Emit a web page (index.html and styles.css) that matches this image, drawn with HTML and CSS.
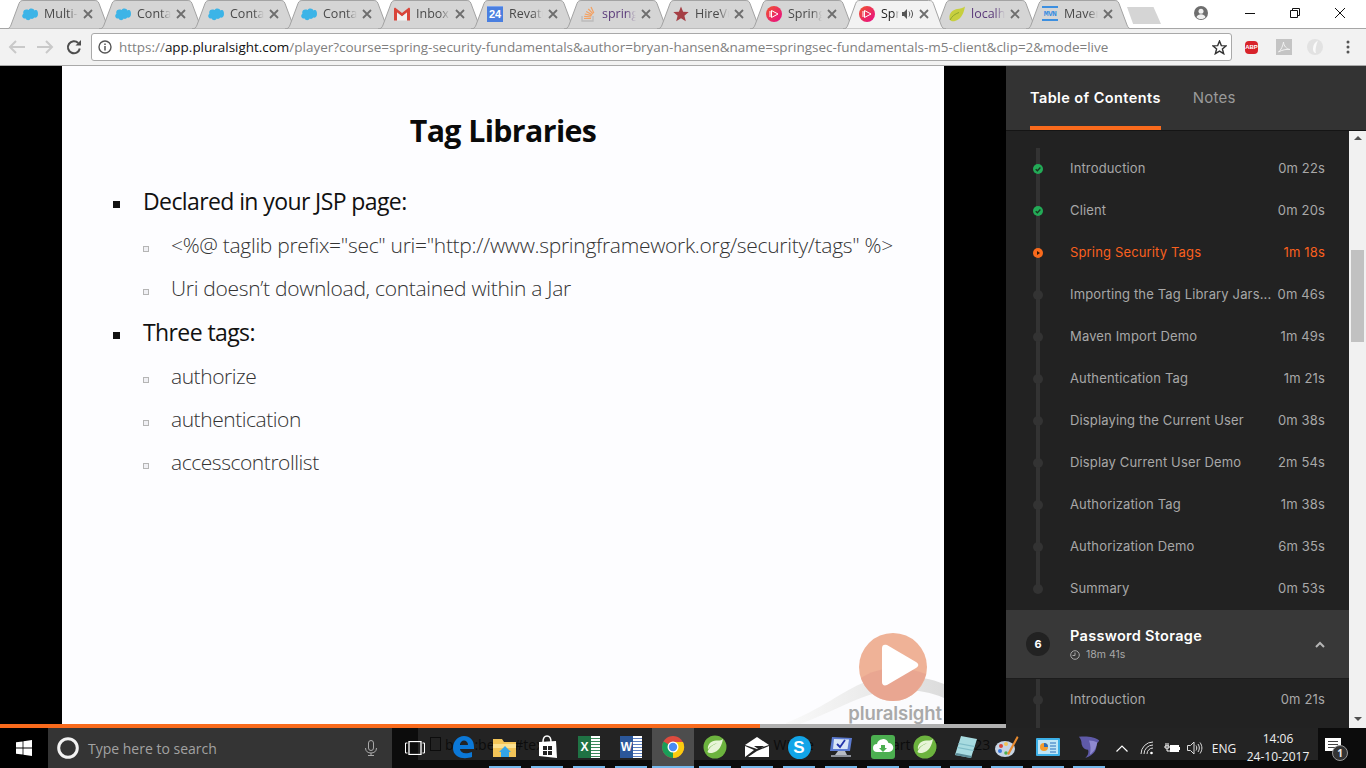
FILE: index.html
```html
<!DOCTYPE html>
<html lang="en">
<head>
<meta charset="utf-8">
<title>Spring Security Fundamentals</title>
<link rel="stylesheet" href="styles.css">
</head>
<body>
<svg class="sprite" aria-hidden="true">
  <defs><linearGradient id="psg" x1="0" y1="0" x2="1" y2="1"><stop offset="0" stop-color="#f0562c"/><stop offset="1" stop-color="#e80a89"/></linearGradient></defs>
  <symbol id="tabshape" viewBox="0 0 106 29" preserveAspectRatio="none"><path d="M0 29C3 29 4 27.5 5 25L13 3.500C14 1 15 .5 18 .5L88 .5C91 .5 92 1 93 3.500L101 25C102 27.500 103 29 106 29Z"/></symbol>
  <symbol id="x" viewBox="0 0 10 10"><path d="M1 1L9 9M9 1L1 9" fill="none" stroke="#6e6e6e" stroke-width="1.800"/></symbol>
  <symbol id="cloud" viewBox="0 0 16 12"><path fill="#3cb4e7" d="M6.600 1.900C7.300 1 8.300.5 9.400.5c1.400 0 2.600.8 3.200 1.900.5-.2 1-.3 1.500-.3 1 0 1.900 1.700 1.900 3.800 0 2.200-1.300 3.800-3 3.800-.3 0-.6 0-.8-.1-.5.8-1.300 1.300-2.300 1.300-.4 0-.8-.1-1.200-.3-.5 1-1.400 1.600-2.500 1.600s-2.100-.7-2.500-1.700c-.2 0-.4.1-.6.100C1.300 10.600.2 9.400.2 8c0-.9.500-1.800 1.200-2.300-.2-.4-.2-.8-.2-1.200C1.200 2.900 2.600 1.600 4.200 1.600c.9 0 1.800.1 2.400.3z"/></symbol>
  <symbol id="psicon" viewBox="0 0 16 16"><circle cx="8" cy="8" r="8" fill="url(#psg)"/><path d="M4 5v6M5.500 4.500v7L12 8z" fill="none" stroke="#fff" stroke-width="1"/></symbol>
  <symbol id="leaf" viewBox="0 0 24 24"><circle cx="12" cy="12" r="11.500" fill="#6cb33e"/><path d="M20 4C19 10 16 17 9 18c-2 .3-3.500-.2-4.500-1C6 12 11 9 15 8 11 8.500 7 11 5 14.500 4 9 9 5 14 5.500c2.500.2 4.500-.2 6-1.500z" fill="#e8f4d8"/></symbol>
  <symbol id="done" viewBox="0 0 10 10"><circle cx="5" cy="5" r="5" fill="#23ab57"/><path d="M2.700 5.200L4.400 6.800 7.400 3.500" fill="none" stroke="#17351f" stroke-width="1.300"/></symbol>
  <symbol id="current" viewBox="0 0 10 10"><circle cx="5" cy="5" r="5" fill="#f96a1c"/><path d="M4 3l3 2-3 2z" fill="#2a1608"/></symbol>
  <symbol id="arrow" viewBox="0 0 18 14"><path d="M17 7H2M8 1L2 7l6 6" fill="none" stroke-width="2"/></symbol>
</svg>

<header class="tabstrip">
  <div class="tab"><svg class="tabbg"><use href="#tabshape"/></svg><svg class="fav"><use href="#cloud"/></svg><span class="ttl">Multi-Org</span><svg class="close"><use href="#x"/></svg></div>
  <div class="tab"><svg class="tabbg"><use href="#tabshape"/></svg><svg class="fav"><use href="#cloud"/></svg><span class="ttl">Contacts</span><svg class="close"><use href="#x"/></svg></div>
  <div class="tab"><svg class="tabbg"><use href="#tabshape"/></svg><svg class="fav"><use href="#cloud"/></svg><span class="ttl">Contacts</span><svg class="close"><use href="#x"/></svg></div>
  <div class="tab"><svg class="tabbg"><use href="#tabshape"/></svg><svg class="fav"><use href="#cloud"/></svg><span class="ttl">Contacts</span><svg class="close"><use href="#x"/></svg></div>
  <div class="tab"><svg class="tabbg"><use href="#tabshape"/></svg>
    <svg class="fav" viewBox="0 0 16 13"><path d="M0 1v12h3V5l5 4 5-4v8h3V1l-1-1-7 5.500L1 0z" fill="#d9453a"/><path d="M3 5v8h10V5L8 9z" fill="#f1f1f1"/></svg>
    <span class="ttl">Inbox (12)</span><svg class="close"><use href="#x"/></svg></div>
  <div class="tab"><svg class="tabbg"><use href="#tabshape"/></svg><span class="cal">24</span><span class="ttl">Revature</span><svg class="close"><use href="#x"/></svg></div>
  <div class="tab"><svg class="tabbg"><use href="#tabshape"/></svg>
    <svg class="fav" viewBox="0 0 16 16"><path d="M2 10v5h11v-5" fill="none" stroke="#bcbbbb" stroke-width="1.300"/><path d="M4 12.500h7M4.200 10.400l7 .6M4.800 8l6.800 1.700M6.200 5.500l6 3.300M8.300 3l4.800 4.800M11 1l2.800 6" fill="none" stroke="#f4a060" stroke-width="1.200"/></svg>
    <span class="ttl spr">spring sec</span><svg class="close"><use href="#x"/></svg></div>
  <div class="tab"><svg class="tabbg"><use href="#tabshape"/></svg>
    <svg class="fav" viewBox="0 0 16 16"><path d="M8 .5l2.100 5.200 5.600.4-4.300 3.600 1.400 5.500L8 12.200 3.200 15.200l1.400-5.500L.3 6.100l5.600-.4z" fill="#a53f45"/></svg>
    <span class="ttl">HireVue</span><svg class="close"><use href="#x"/></svg></div>
  <div class="tab"><svg class="tabbg"><use href="#tabshape"/></svg><svg class="fav"><use href="#psicon"/></svg><span class="ttl">Spring Sec</span><svg class="close"><use href="#x"/></svg></div>
  <div class="tab active"><svg class="tabbg"><use href="#tabshape"/></svg><svg class="fav"><use href="#psicon"/></svg><span class="ttl short">Spring</span>
    <svg class="audio" viewBox="0 0 12 10"><path d="M0 3h2l3-3v10L2 7H0z" fill="#555"/><path d="M7 2.500c1 1.500 1 3.500 0 5M9 1c2 2.500 2 5.500 0 8" fill="none" stroke="#555"/></svg>
    <svg class="close"><use href="#x"/></svg></div>
  <div class="tab"><svg class="tabbg"><use href="#tabshape"/></svg>
    <svg class="fav" viewBox="0 0 16 16"><path d="M16 .5C15 6 13 13 6 15c-2 .5-4 .2-5-1C-1 10 2 4 8 3c3-.4 6-.8 8-2.500z" fill="#c7cf3e"/><path d="M1 14c2-4 5-6 9-7.500" stroke="#8fa52f" fill="none"/></svg>
    <span class="ttl spr">localhost</span><svg class="close"><use href="#x"/></svg></div>
  <div class="tab"><svg class="tabbg"><use href="#tabshape"/></svg><span class="mvn">MVN</span><span class="ttl">Maven R</span><svg class="close"><use href="#x"/></svg></div>
  <div class="newtab"></div>
  <div class="winctl">
    <svg class="profile" viewBox="0 0 14 14"><circle cx="7" cy="7" r="7" fill="#6e6e6e"/><circle cx="7" cy="5.200" r="2.500" fill="#f1f1f1"/><path d="M2.500 11c1-2 2.500-2.800 4.500-2.800s3.500.8 4.500 2.800C10.500 12.500 9 13 7 13s-3.500-.5-4.500-2z" fill="#f1f1f1"/></svg>
    <svg class="wbtn" viewBox="0 0 10 10"><path d="M0 5.500h10" stroke="#111"/></svg>
    <svg class="wbtn" viewBox="0 0 10 10"><path d="M.5 2.500h7v7h-7zM2.500 2.500v-2h7v7h-2" fill="none" stroke="#111"/></svg>
    <svg class="wbtn" viewBox="0 0 10 10"><path d="M0 0l10 10M10 0L0 10" stroke="#111"/></svg>
  </div>
</header>

<nav class="toolbar">
  <svg class="nav-ic nav-dim"><use href="#arrow"/></svg>
  <svg class="nav-ic nav-dim flip"><use href="#arrow"/></svg>
  <svg class="reload" viewBox="0 0 16 16"><path d="M13.800 9.500A6 6 0 1 1 12.200 4" fill="none" stroke="#4d4d4d" stroke-width="2"/><path d="M9.500 6.500H15V1z" fill="#4d4d4d"/></svg>
  <div class="omnibox">
    <svg class="info" viewBox="0 0 14 14"><circle cx="7" cy="7" r="6" fill="none" stroke="#555" stroke-width="1.400"/><path d="M7 6v4.500M7 3.500v1.500" stroke="#555" stroke-width="1.500"/></svg>
    <span class="url">https://<b>app.pluralsight.com</b>/player?course=spring-security-fundamentals&amp;author=bryan-hansen&amp;name=springsec-fundamentals-m5-client&amp;clip=2&amp;mode=live</span>
    <svg class="star" viewBox="0 0 14 14"><path d="M7 1l1.700 4.200 4.500.3-3.500 2.900 1.200 4.400L7 10.400 3.100 12.800l1.200-4.400L.8 5.500l4.500-.3z" fill="none" stroke="#333" stroke-width="1.300"/></svg>
  </div>
  <div class="ext">
    <span class="abp">ABP</span>
    <svg class="ext-ic" viewBox="0 0 16 16"><rect width="16" height="16" fill="#c4c4c4"/><path d="M2.500 13C5 11 7 7 7.500 3c.3 4 3 7 6.500 7.500-4-.5-8 .5-11.500 2.500z" fill="none" stroke="#f2f2f2"/></svg>
    <svg class="ext-ic" viewBox="0 0 16 16"><circle cx="8" cy="8" r="8" fill="#e2e2e2"/><path d="M11 1.500C8 3 6 6 6 9.500S7.500 14 9 14c-1-2 0-8 2-12.500z" fill="#fafafa"/></svg>
    <svg class="dots" viewBox="0 0 4 14"><circle cx="2" cy="2" r="1.500"/><circle cx="2" cy="7" r="1.500"/><circle cx="2" cy="12" r="1.500"/></svg>
  </div>
</nav>

<main class="main">
  <section class="video">
    <div class="stage">
      <article class="slide">
        <h1>Tag Libraries</h1>
        <ul class="l1">
          <li class="first">Declared in your JSP page:</li>
        </ul>
        <ul class="l2 sub1">
          <li>&lt;%@ taglib prefix="sec" uri="http://www.springframework.org/security/tags" %&gt;</li>
          <li>Uri doesn’t download, contained within a Jar</li>
        </ul>
        <ul class="l1">
          <li>Three tags:</li>
        </ul>
        <ul class="l2 sub2">
          <li>authorize</li>
          <li>authentication</li>
          <li>accesscontrollist</li>
        </ul>
        <div class="mark">
          <svg class="mark-art" viewBox="0 0 184 92">
            <defs><linearGradient id="swoosh" x1="0" y1="0" x2="1" y2="0"><stop offset="0" stop-color="#fafafa"/><stop offset="1" stop-color="#dcdcdc"/></linearGradient></defs>
            <path d="M26 91C60 78 84 58 105 50c25-8 55-8 79 2v40H26z" fill="url(#swoosh)"/>
            <path d="M40 92C72 80 95 66 120 60c22-4 46-2 64 6v26z" fill="#fbfbfd"/>
            <circle cx="133" cy="35" r="34" fill="#efb297"/>
            <path d="M101 46c14-10 40-14 65-4-5 16-17 27-33 27-15 0-27-9-32-23z" fill="#e59f8e" opacity=".6"/>
            <path d="M122 16c0-3 2-4 5-3l29 17c3 2 3 4 0 6l-29 17c-3 1-5 0-5-3z" fill="#fff"/>
          </svg>
          <span class="mark-text">pluralsight</span>
        </div>
      </article>
    </div>
    <div class="progress"><div class="progress-done"></div></div>
  </section>

  <aside class="side">
    <div class="side-head">
      <span class="side-tab on">Table of Contents</span>
      <span class="side-tab">Notes</span>
    </div>
    <div class="side-body">
      <div class="toc">
        <div class="row"><span class="track top"><svg class="dot"><use href="#done"/></svg></span><span class="name">Introduction</span><span class="time">0m 22s</span></div>
        <div class="row"><span class="track"><svg class="dot"><use href="#done"/></svg></span><span class="name">Client</span><span class="time">0m 20s</span></div>
        <div class="row cur"><span class="track"><svg class="dot"><use href="#current"/></svg></span><span class="name">Spring Security Tags</span><span class="time">1m 18s</span></div>
        <div class="row"><span class="track"><i class="pt"></i></span><span class="name">Importing the Tag Library Jars...</span><span class="time">0m 46s</span></div>
        <div class="row"><span class="track"><i class="pt"></i></span><span class="name">Maven Import Demo</span><span class="time">1m 49s</span></div>
        <div class="row"><span class="track"><i class="pt"></i></span><span class="name">Authentication Tag</span><span class="time">1m 21s</span></div>
        <div class="row"><span class="track"><i class="pt"></i></span><span class="name">Displaying the Current User</span><span class="time">0m 38s</span></div>
        <div class="row"><span class="track"><i class="pt"></i></span><span class="name">Display Current User Demo</span><span class="time">2m 54s</span></div>
        <div class="row"><span class="track"><i class="pt"></i></span><span class="name">Authorization Tag</span><span class="time">1m 38s</span></div>
        <div class="row"><span class="track"><i class="pt"></i></span><span class="name">Authorization Demo</span><span class="time">6m 35s</span></div>
        <div class="row"><span class="track end"><i class="pt"></i></span><span class="name">Summary</span><span class="time">0m 53s</span></div>
        <div class="module">
          <span class="num">6</span>
          <div class="mod-text">
            <div class="mod-title">Password Storage</div>
            <div class="mod-time"><svg class="clock" viewBox="0 0 10 10"><circle cx="5" cy="5" r="4.300" fill="none" stroke="#a8a8a8"/><path d="M5 2.500V5.500H2.500" fill="none" stroke="#a8a8a8"/></svg>18m 41s</div>
          </div>
          <svg class="chev" viewBox="0 0 10 7"><path d="M1 6l4-4 4 4" fill="none" stroke="#b5b5b5" stroke-width="2"/></svg>
        </div>
        <div class="row"><span class="track"><i class="pt"></i></span><span class="name">Introduction</span><span class="time">0m 21s</span></div>
        <div class="row"><span class="track"></span></div>
      </div>
      <div class="scroll">
        <span class="sarrow up"></span>
        <span class="thumb"></span>
        <span class="sarrow down"></span>
      </div>
    </div>
  </aside>
</main>

<footer class="taskbar">
  <div class="ghost"><i class="g-doc"></i><span class="g1">be</span><span class="g2">:bea</span><span class="g3">#text</span><span class="g4">Wi</span><span class="g5">ile</span><span class="g6">art</span><span class="g7">rt</span><span class="g8">23</span></div>
  <div class="start"><svg class="winlogo" viewBox="0 0 16 16"><path d="M0 2.300l6.600-.9v6.200H0zM7.400 1.300L16 0v7.600H7.400zM0 8.400h6.600v6.200L0 13.700zM7.400 8.400H16V16l-8.600-1.300z" fill="#fff"/></svg></div>
  <div class="search">
    <svg class="cortana" viewBox="0 0 22 22"><circle cx="11" cy="11" r="9.300" fill="none" stroke="#f2f2f2" stroke-width="3"/></svg>
    <span class="search-text">Type here to search</span>
    <svg class="mic" viewBox="0 0 12 16"><rect x="3.500" y=".5" width="5" height="10" rx="2.500" fill="none" stroke="#aaa"/><path d="M.5 8c0 3.500 2.500 5 5.500 5s5.500-1.500 5.500-5M6 13v2.500M3 15.500h6" fill="none" stroke="#aaa"/></svg>
  </div>
  <div class="taskview"><svg viewBox="0 0 20 14"><rect x="4" y=".5" width="12" height="13" fill="none" stroke="#fff" stroke-width="1.300"/><path d="M2.500 2H.5v10h2M17.500 2h2v10h-2" fill="none" stroke="#fff"/></svg></div>
  <div class="apps">
    <div class="app"><svg viewBox="0 0 24 24"><path d="M2 13C2 6 7 1 13 1c6 0 10 4 10 11v2H9c.5 4 5 5.500 12 3v5c-4 1.500-11 2-15-1-3-2-4-5-4-8zm7-3h8c0-3-2-4.500-4-4.500S9 7 9 10z" fill="#0b78d7"/></svg></div>
    <div class="app run"><svg viewBox="0 0 24 24"><path d="M0 4h9l2 3h12v15H0z" fill="#f3c558"/><path d="M0 9h23v4H0z" fill="#fbe08f"/><path d="M12 11l6 6h-2v5H8v-5H6z" fill="#33a5e8"/></svg></div>
    <div class="app run"><svg viewBox="0 0 24 24"><path d="M4 7l17-1 1 17L4 21z" fill="#fff"/><path d="M8 7c0-4 2-6 4-6s4 2 4 6" fill="none" stroke="#fff" stroke-width="1.500"/><path d="M8 11h4v4H8zM13 11h4v4h-4zM8 16h4v4H8zM13 16h4v4h-4z" fill="#222"/></svg></div>
    <div class="app run"><span class="office xl"><b>X</b><i></i></span></div>
    <div class="app run"><span class="office wd"><b>W</b><i></i></span></div>
    <div class="app run act"><svg viewBox="0 0 24 24"><circle cx="12" cy="12" r="11" fill="#dd4b3e"/><path d="M12 12L2.500 6.500A11 11 0 0 0 12 23z" fill="#199e58"/><path d="M12 12v11A11 11 0 0 0 22 7H12z" fill="#fbcb0f"/><circle cx="12" cy="12" r="5.500" fill="#fff"/><circle cx="12" cy="12" r="4.200" fill="#4a8bf5"/></svg></div>
    <div class="app run"><svg viewBox="0 0 24 24"><use href="#leaf"/></svg></div>
    <div class="app run"><svg viewBox="0 0 24 20"><path d="M0 8L12 0l12 8-12 4z" fill="#fff"/><path d="M0 9l9 4-9 7zM24 9v11H3l9-6z" fill="#fff"/><path d="M9 9h10l-5 3.500z" fill="#222"/></svg></div>
    <div class="app run"><span class="skype">S</span></div>
    <div class="app run"><svg viewBox="0 0 24 22"><path d="M3 1l20 1-2 13H1z" fill="#5c7bd1"/><path d="M5 3l15 .5L18.500 13H4z" fill="#d8e5f7"/><path d="M8 8l3 3 5-7" fill="none" stroke="#2233aa" stroke-width="1.800"/><path d="M9 15h7l2 4H6z" fill="#b8bcc4"/><path d="M2 19h20v2H2z" fill="#8c9098"/></svg></div>
    <div class="app run"><svg viewBox="0 0 24 24"><rect width="24" height="24" rx="3" fill="#4caf50"/><path d="M6 17a4 4 0 0 1 0-8 6 6 0 0 1 11.500-1A4.500 4.500 0 0 1 18 17z" fill="#fff"/><path d="M10 10h4v3h2l-4 4-4-4h2z" fill="#4caf50"/></svg></div>
    <div class="app run"><svg viewBox="0 0 24 24"><use href="#leaf"/></svg></div>
    <div class="app run"><svg viewBox="0 0 24 24"><path d="M7 1l16 3-6 19-16-3z" fill="#a8dbe0"/><path d="M5 8l16 3-1 1-16-3zM4 12l16 3-1 1-16-3z" fill="#7fbcc7"/><path d="M1 20l16 3 .6-2-15-3z" fill="#5a8a96"/></svg></div>
    <div class="app run"><svg viewBox="0 0 24 24"><ellipse cx="10" cy="14" rx="10" ry="8" fill="#c6d4e4"/><circle cx="6" cy="11" r="2" fill="#d9453a"/><circle cx="11" cy="9" r="2" fill="#f3c558"/><circle cx="5" cy="16" r="2" fill="#3b78d8"/><circle cx="11" cy="18" r="1.800" fill="#4caf50"/><path d="M22 1l1.500 1.500L14 20l-2-1z" fill="#e88a2e"/></svg></div>
    <div class="app run"><svg viewBox="0 0 24 20"><rect y="1" width="24" height="18" rx="1" fill="#3cb0e8"/><rect x="2" y="3" width="20" height="14" fill="#bfe6f7"/><circle cx="8" cy="10" r="4" fill="#f39c2e"/><path d="M8 10V6a4 4 0 0 1 4 4z" fill="#2a6ebb"/><path d="M14 6h6M14 9h6M14 12h6M14 15h6" stroke="#2a6ebb"/></svg></div>
    <div class="app run"><svg viewBox="0 0 24 26"><path d="M1 2c8-1 18 0 22 4-1 2-2 3-3 3 1 6-2 13-12 16 3-3 4-6 3-9-3 0-6-2-7-6 0-3-1-6-3-8z" fill="#5f5aa8"/><path d="M12 6c3 0 7 1 9 2-1 5-3 10-8 13 1-5 1-10-1-15z" fill="#8f8ad0"/></svg></div>
  </div>
  <div class="tray">
    <svg class="t-chev" viewBox="0 0 12 7"><path d="M.5 6.500L6 1l5.500 5.500" fill="none" stroke="#fff" stroke-width="1.200"/></svg>
    <svg class="t-wifi" viewBox="0 0 14 14"><path d="M1 13A12 12 0 0 1 13 1M4 13A9 9 0 0 1 13 4M7 13A6 6 0 0 1 13 7" fill="none" stroke="#ddd"/><circle cx="11.500" cy="12" r="1.300" fill="#fff"/></svg>
    <svg class="t-pow" viewBox="0 0 16 10"><rect x="6" y="2" width="9" height="7" fill="#fff"/><path d="M15.500 4v3" stroke="#fff"/><path d="M2 0v3M4 0v3M1 3h4v2H1zM3 5v3h3" fill="none" stroke="#fff"/></svg>
    <svg class="t-vol" viewBox="0 0 16 14"><path d="M.5 4.500h3L7 1v12L3.500 9.500h-3z" fill="none" stroke="#ddd"/><path d="M9 4.500c1 1.500 1 3.500 0 5M11 3c1.800 2.500 1.800 5.500 0 8M13 1.500c2.500 3.500 2.500 7.500 0 11" fill="none" stroke="#ddd"/></svg>
    <span class="t-eng">ENG</span>
    <span class="t-clock"><span>14:06</span><span>24-10-2017</span></span>
    <span class="t-note"><svg viewBox="0 0 16 14"><path d="M0 0h16v13H0z" fill="#fff"/><path d="M3 3.500h10M3 6.500h10M3 9.500h10" stroke="#444"/></svg><b class="badge">1</b></span>
  </div>
</footer>
</body>
</html>
```
FILE: styles.css
```css
* { box-sizing: border-box; }
html, body { margin: 0; padding: 0; }
body {
  width: 1366px;
  height: 768px;
  overflow: hidden;
  display: flex;
  flex-direction: column;
  font-family: "Open Sans", "Liberation Sans", sans-serif;
  background: #000;
}
.sprite { position: absolute; width: 0; height: 0; overflow: hidden; }

/* tabs */
.tabstrip {
  height: 29px;
  flex: none;
  display: flex;
  align-items: flex-start;
  padding-left: 6px;
  background: linear-gradient(#fff 28px, #a6a6a6 28px);
  position: relative;
}
.tab {
  position: relative;
  flex: none;
  width: 106px;
  height: 29px;
  margin-right: -13px;
  display: flex;
  align-items: center;
  padding: 0 17px 2px 16px;
  font-size: 12.500px;
  color: #4a4a4a;
}
.tabbg { position: absolute; left: 0; top: 0; width: 106px; height: 29px; fill: #d5d5d5; stroke: #a3a3a3; }
.tab.active { z-index: 2; width: 103px; margin-right: -13px; }
.tab.active .tabbg { fill: #f2f2f2; width: 103px; }
.fav { position: relative; flex: none; width: 16px; height: 16px; margin-right: 6px; }
.ttl {
  position: relative;
  flex: 1;
  overflow: hidden;
  white-space: nowrap;
  -webkit-mask-image: linear-gradient(to right, #000 70%, transparent);
  mask-image: linear-gradient(to right, #000 70%, transparent);
}
.ttl.short { flex: none; width: 18px; color: #222; }
.ttl.spr { color: #5b3a7a; }
.close { position: relative; flex: none; width: 10px; height: 10px; margin-left: 5px; margin-right: 2px; }
.audio { position: relative; flex: none; width: 12px; height: 10px; margin-left: 3px; margin-right: 0; }
.cal {
  position: relative; flex: none; width: 16px; height: 16px; margin-right: 6px;
  background: #4a7fe0; color: #fff; font: 700 11px/15px "Liberation Sans", sans-serif; text-align: center;
  border-top: 1px solid #7ca4ee;
}
.mvn {
  position: relative; flex: none; width: 16px; height: 15px; margin-right: 6px;
  border-top: 2px solid #3c8fe0; border-bottom: 2px solid #3c8fe0;
  color: #3c8fe0; font: 700 8px/11px "Liberation Mono", monospace; letter-spacing: -.6px; text-align: center;
}
.newtab {
  position: absolute; left: 1127px; top: 7px; width: 34px; height: 17px;
  background: #d5d5d5;
  clip-path: polygon(0 0, 78% 0, 100% 100%, 18% 100%);
}
.winctl {
  position: absolute; right: 0; top: 0; height: 26px; width: 174px;
  display: flex; align-items: center;
}
.profile { flex: none; width: 14px; height: 14px; margin-left: 2px; margin-right: 37px; }
.wbtn { flex: none; width: 10px; height: 10px; margin-right: 35px; }

/* toolbar */
.toolbar {
  height: 37px;
  flex: none;
  background: #f2f2f2;
  border-bottom: 1px solid #a9a9a9;
  display: flex;
  align-items: center;
  padding: 0 0 0 8px;
}
.nav-ic { width: 18px; height: 14px; margin-right: 10px; stroke: #c9c9c9; }
.nav-dim { flex: none; }
.flip { transform: scaleX(-1); }
.reload { width: 16px; height: 16px; flex: none; margin-left: 2px; }
.omnibox {
  width: 1141px; height: 28px; margin-left: 9px; flex: none;
  background: #fff;
  border: 1px solid #a9a9a9;
  border-radius: 3px;
  display: flex; align-items: center;
  padding: 0 4px 0 6px;
}
.info { width: 14px; height: 14px; flex: none; margin-right: 7px; }
.url { flex: 1; font-size: 13.500px; letter-spacing: -.02px; color: #7f7f7f; white-space: nowrap; overflow: hidden; padding-bottom: 1px; }
.url b { font-weight: 400; color: #111; }
.star { width: 15px; height: 15px; flex: none; }
.ext { display: flex; align-items: center; }
.abp {
  width: 13px; height: 13px; margin-left: 13px; flex: none; background: #d8232a; color: #fff;
  font: 700 6px/13px "Liberation Sans", sans-serif; text-align: center; border-radius: 4px;
}
.ext-ic { width: 16px; height: 16px; flex: none; margin-left: 18px; }
.ext-ic + .ext-ic { margin-left: 15px; }
.dots { width: 4px; height: 14px; margin-left: 23px; fill: #555; }

/* main */
.main { flex: 1; min-height: 0; display: flex; }
.video { width: 1006px; flex: none; display: flex; flex-direction: column; }
.stage { flex: 1; min-height: 0; background: #000; padding: 0 62px; }
.slide { position: relative; width: 882px; height: 658px; background: #fdfdff; overflow: hidden; padding: 45px 0 0 51px; color: #111; }
.slide h1 { margin: 0 0 0 -51px; text-align: center; font-size: 30.300px; line-height: 40px; font-weight: 700; letter-spacing: -.6px; color: #0a0a0a; }
.l1, .l2 { list-style: none; margin: 0; padding: 0; }
.l1 li { position: relative; padding-left: 30px; font-size: 23px; line-height: 44px; letter-spacing: -.6px; }
.l1 li.first { margin-top: 28px; }
.l1 li::before { content: ""; position: absolute; left: 0; top: 22px; width: 7px; height: 7px; background: #111; }
.l2 li { position: relative; padding-left: 58px; font-size: 21px; line-height: 43px; font-weight: 300; letter-spacing: -.3px; color: #333; }
.sub1 { margin-top: 1px; }
.sub2 { margin-top: 1px; }
.sub2 li { letter-spacing: -.45px; }
.l2 li::before { content: ""; position: absolute; left: 30px; top: 22px; width: 4px; height: 4px; border: 1px solid #b5b5b5; background: #f0f0f4; }
.mark { position: absolute; right: 0; bottom: 0; width: 184px; height: 92px; }
.mark-art { display: block; width: 184px; height: 92px; }
.mark-text { position: absolute; right: 2px; bottom: 0; font: 600 18.500px/22px "Inter", "Open Sans", sans-serif; color: #a9a9a9; letter-spacing: -.1px; }
.progress { height: 4px; flex: none; background: #b0b0b0; }
.progress-done { width: 760px; height: 4px; background: #f96a1c; }

/* sidebar */
.side { width: 360px; flex: none; display: flex; flex-direction: column; background: #222; font-family: "Inter", "Open Sans", sans-serif; }
.side-head {
  height: 65px; flex: none;
  background: #333;
  border-bottom: 1px solid #151515;
  display: flex; gap: 32px; padding-left: 24px;
}
.side-tab { height: 64px; line-height: 64px; font-size: 15px; color: #9a9a9a; font-weight: 400; letter-spacing: .25px; }
.side-tab.on { font-size: 14.500px; color: #fff; font-weight: 600; border-bottom: 4px solid #f96a1c; letter-spacing: .41px; }
.side-body { flex: 1; min-height: 0; display: flex; }
.toc { flex: 1; min-width: 0; overflow: hidden; padding-top: 17px; }
.row { display: flex; height: 42px; align-items: center; padding-right: 24px; font-size: 13px; letter-spacing: .15px; color: #a8a8a8; }
.row.cur { color: #f9601e; }
.track {
  flex: none; width: 10px; height: 42px; margin: 0 27px;
  display: flex; align-items: center; justify-content: center;
  background: linear-gradient(#333, #333) center / 4px 100% no-repeat;
}
.track.end { background-size: 4px 50%; background-position: center top; }
.dot { width: 10px; height: 10px; flex: none; }
.pt { width: 10px; height: 10px; border-radius: 50%; background: #333; }
.name { flex: 1; min-width: 0; white-space: nowrap; padding-bottom: 2px; }
.time { flex: none; padding-bottom: 2px; }
.module {
  height: 69px; background: #383838; border-bottom: 1px solid #1c1c1c;
  display: flex; align-items: center; padding: 0 24px 0 20px;
}
.num {
  flex: none; width: 24px; height: 24px; border-radius: 50%; background: #222; color: #fff;
  font-size: 11px; font-weight: 700; line-height: 24px; text-align: center; margin-right: 20px;
}
.mod-text { flex: 1; }
.mod-title { color: #fff; font-size: 14.500px; font-weight: 600; line-height: 18px; letter-spacing: .3px; }
.mod-time { display: flex; align-items: center; gap: 6px; margin-top: 3px; font-size: 10.500px; line-height: 14px; color: #a8a8a8; }
.clock { width: 10px; height: 10px; }
.chev { width: 10px; height: 7px; }
.scroll { width: 17px; flex: none; background: #f1f1f1; display: flex; flex-direction: column; align-items: center; }
.sarrow { flex: none; width: 0; height: 0; border-left: 4px solid transparent; border-right: 4px solid transparent; }
.sarrow.up { border-bottom: 4px solid #505050; margin-top: 5px; }
.sarrow.down { border-top: 4px solid #505050; margin-top: auto; margin-bottom: 7px; }
.thumb { flex: none; width: 13px; height: 92px; background: #c1c1c1; margin-top: 110px; }

/* taskbar */
.taskbar {
  position: relative;
  height: 40px; flex: none;
  display: flex; align-items: stretch;
  background: #0c0c0c;
}
.ghost {
  position: absolute; left: 418px; top: 0; width: 900px; height: 32px;
  background: #232323; display: flex; align-items: center;
  color: #0c0c0c; font-size: 14px; white-space: nowrap;
}
.g-doc { flex: none; width: 11px; height: 14px; border: 1px solid #0c0c0c; margin-left: 12px; }
.g1 { margin-left: 4px; }
.g2 { margin-left: 13px; }
.g3 { margin-left: 12px; }
.g4 { margin-left: 225px; }
.g5 { margin-left: 9px; }
.g6 { margin-left: 78px; }
.g7 { margin-left: 16px; }
.g8 { margin-left: 37px; }
.start { position: relative; width: 48px; flex: none; background: #000; display: flex; align-items: center; justify-content: center; }
.winlogo { width: 16px; height: 16px; }
.search { position: relative; width: 344px; flex: none; background: #343434; display: flex; align-items: center; padding-left: 9px; }
.cortana { width: 22px; height: 22px; flex: none; }
.search-text { flex: 1; margin-left: 9px; color: #a2a2a2; font-size: 14px; }
.mic { width: 12px; height: 16px; flex: none; margin-right: 15px; }
.taskview { position: relative; width: 50px; flex: none; display: flex; align-items: center; justify-content: center; padding-right: 4px; }
.taskview svg { width: 20px; height: 14px; }
.apps { position: relative; flex: none; width: 667px; display: flex; }
.app { flex: none; width: 42px; display: flex; align-items: center; justify-content: center; padding-bottom: 2px; }
.app:nth-child(n+12) { width: 41px; }
.app svg { width: 24px; height: 24px; }
.run { background: linear-gradient(#76b9ed, #76b9ed) center bottom / 32px 2px no-repeat; }
.act { background: linear-gradient(#76b9ed, #76b9ed) center bottom / 100% 2px no-repeat, #4d4d4d; }
.office { position: relative; width: 22px; height: 22px; display: flex; background: #f4f4f4; }
.office b { width: 13px; height: 22px; color: #fff; font: 700 12px/22px "Liberation Sans", sans-serif; text-align: center; }
.office i { flex: 1; background: repeating-linear-gradient(#fff 0 2px, #5b7fc0 2px 3px); }
.xl b { background: #1f7244; }
.xl i { background: repeating-linear-gradient(#fff 0 2px, #3a8a5c 2px 3px); }
.wd b { background: #2b579a; }
.skype { width: 23px; height: 23px; border-radius: 50%; background: #12a5e8; color: #fff; font: 700 17px/23px "Liberation Sans", sans-serif; text-align: center; }
.tray { position: relative; flex: 1; display: flex; align-items: center; color: #f0f0f0; padding-left: 1px; }
.t-chev { width: 12px; height: 7px; margin: 0 6px 0 6px; flex: none; }
.t-wifi { width: 14px; height: 14px; margin: 0 6px; flex: none; }
.t-pow { width: 16px; height: 10px; margin: 0 4px; flex: none; }
.t-vol { width: 16px; height: 14px; margin: 0 3px; flex: none; }
.t-eng { width: 36px; text-align: center; flex: none; font-size: 12px; }
.t-clock { width: 72px; flex: none; display: flex; flex-direction: column; align-items: center; font-size: 12px; line-height: 18px; }
.t-note { position: relative; width: 52px; height: 40px; flex: none; display: flex; align-items: center; }
.t-note svg { width: 16px; height: 14px; margin-left: 11px; margin-bottom: 6px; }
.badge {
  position: absolute; left: 18px; top: 17px; width: 16px; height: 16px; border-radius: 50%;
  background: #333; border: 1px solid #999; color: #eee; font: 700 10px/14px "Open Sans", sans-serif; text-align: center;
}
```
